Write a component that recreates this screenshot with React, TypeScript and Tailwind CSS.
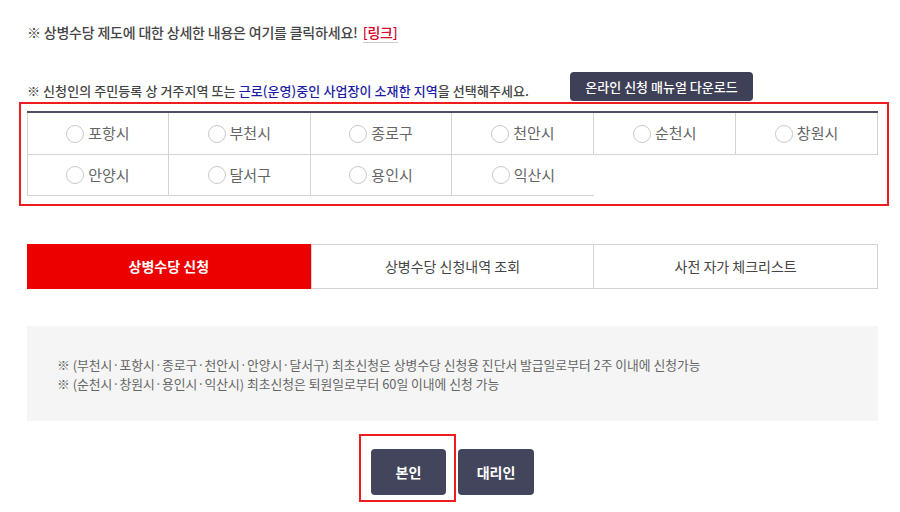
import React, { useState } from 'react';

const regions = ['포항시', '부천시', '종로구', '천안시', '순천시', '창원시', '안양시', '달서구', '용인시', '익산시'];
const tabs = ['상병수당 신청', '상병수당 신청내역 조회', '사전 자가 체크리스트'];

export default function App() {
  const [picked, setPicked] = useState<string | null>(null);
  const [tab, setTab] = useState(0);

  return (
    <div className="w-[900px] h-[512px] bg-white overflow-hidden font-['Noto_Sans_CJK_KR','Noto_Sans',sans-serif]">
      <div className="ml-[27px] w-[851px] pt-[22px]">
        {/* notice lines */}
        <p className="text-[14px] leading-[20px] font-medium text-[#444] tracking-[-0.2px]">
          ※ 상병수당 제도에 대한 상세한 내용은 여기를 클릭하세요!{' '}
          <a className="ml-[2px] text-[#d4002a] border-b border-[#ccc] cursor-pointer">[링크]</a>
        </p>

        <div className="mt-[30px] flex items-end">
          <p className="text-[13px] leading-[20px] font-medium text-[#444] tracking-[0.08px]">
            ※ 신청인의 주민등록 상 거주지역 또는{' '}
            <span className="text-[#1c1ca8]">근로(운영)중인 사업장이 소재한 지역</span>을 선택해주세요.
          </p>
          <button className="ml-[41px] h-[29px] w-[183px] rounded-[4px] bg-[#3e4057] text-white text-[13px] font-medium">
            온라인 신청 매뉴얼 다운로드
          </button>
        </div>

        {/* region picker */}
        <div className="mt-px ml-[-8px] w-[870px] border-2 border-[#ee1c1c] pt-[7px] pb-[8px] pl-[6px] pr-[9px]">
          <div className="grid grid-cols-6 border-t-2 border-[#4d4d63]">
            {regions.map((r, i) => (
              <label
                key={r}
                className={
                  'flex items-center justify-center gap-[4px] border-b border-[#d3d3d3] cursor-pointer ' +
                  (i < 6 ? 'h-[42px] ' : 'h-[41px] ') +
                  (i % 6 === 0 ? 'border-l ' : '') +
                  (i !== 9 ? 'border-r' : '')
                }
                onClick={() => setPicked(r)}
              >
                <span className="w-[18px] h-[18px] rounded-full border border-[#c9c9c9] flex items-center justify-center">
                  {picked === r && <span className="w-[8px] h-[8px] rounded-full bg-[#3e4057]" />}
                </span>
                <span className="text-[15px] text-[#666]">{r}</span>
              </label>
            ))}
          </div>
        </div>

        {/* tabs */}
        <div className="mt-[38px] grid grid-cols-3 h-[45px]">
          {tabs.map((t, i) => (
            <button
              key={t}
              onClick={() => setTab(i)}
              className={
                tab === i
                  ? 'bg-[#ec0000] text-white text-[14px] font-bold'
                  : 'bg-white text-[#444] text-[14px] border border-[#d3d3d3] ' + (i === 2 ? 'border-l-0' : '')
              }
            >
              {t}
            </button>
          ))}
        </div>

        {/* info box */}
        <div className="mt-[37px] h-[95px] bg-[#f5f5f5] flex flex-col justify-center pl-[30px] text-[12.8px] leading-[19px] text-[#666]">
          <p>※ (부천시·포항시·종로구·천안시·안양시·달서구) 최초신청은 상병수당 신청용 진단서 발급일로부터 2주 이내에 신청가능</p>
          <p>※ (순천시·창원시·용인시·익산시) 최초신청은 퇴원일로부터 60일 이내에 신청 가능</p>
        </div>

        {/* who applies */}
        <div className="mt-[13px] pl-[332px] flex items-start">
          <div className="border-2 border-[#ee1c1c] pt-[13px] pb-[5px] pl-[10px] pr-[8px]">
            <button className="w-[75px] h-[46px] rounded-[4px] bg-[#43455c] text-white text-[14px] font-bold">
              본인
            </button>
          </div>
          <button className="ml-[2px] mt-[15px] w-[76px] h-[46px] rounded-[4px] bg-[#43455c] text-white text-[14px] font-bold">
            대리인
          </button>
        </div>
      </div>
    </div>
  );
}
